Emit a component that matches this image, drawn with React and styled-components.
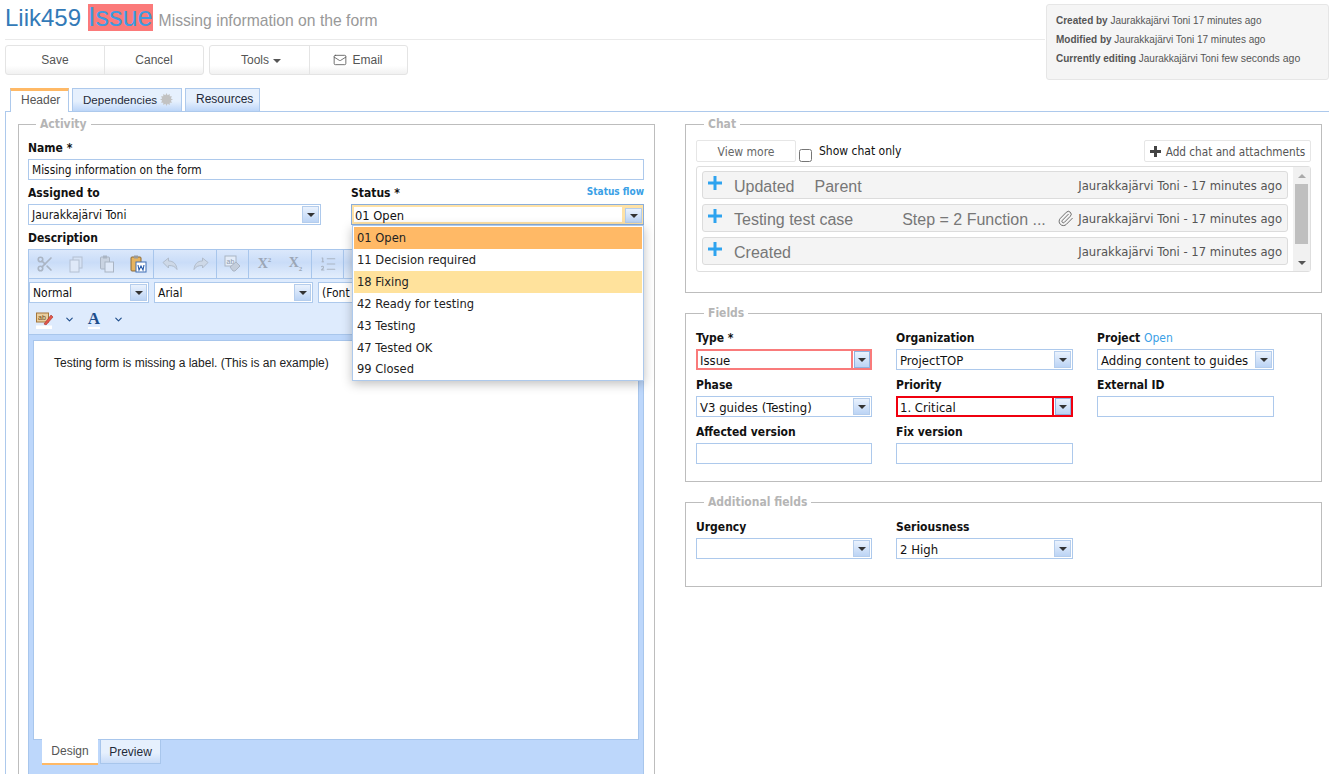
import React from "react"
import styled, { createGlobalStyle } from "styled-components"
import { Scissors, ListOrdered, Mail, Paperclip, ChevronDown } from "lucide-react"

const Global = createGlobalStyle`
    html, body { margin: 0; padding: 0; background: #fff; }
    * { box-sizing: border-box; }
`;

const FORM_FONT = `"DejaVu Sans", "Noto Sans", sans-serif`
const ARIAL = `"Liberation Sans", Arial, sans-serif`

const statuses = [
    { text: "01 Open", bg: "#ffb966" },
    { text: "11 Decision required" },
    { text: "18 Fixing", bg: "#ffe29c" },
    { text: "42 Ready for testing" },
    { text: "43 Testing" },
    { text: "47 Tested OK" },
    { text: "99 Closed" },
]

const chats = [
    { title: "Updated", detail: "Parent", gap: 20 },
    { title: "Testing test case", detail: "Step = 2 Function ...", gap: 49, clip: true },
    { title: "Created" },
]

function Select({ value, width }) {
    return (
        <SelectBox $width={width}>
            <SelectText>{value}</SelectText>
            <SelectArrow><i /></SelectArrow>
        </SelectBox>
    )
}

function App() {
    return (
        <Page>
            <Global />
            <MetaPanel>
                <p><b>Created by</b> Jaurakkajärvi Toni 17 minutes ago</p>
                <p><b>Modified by</b> Jaurakkajärvi Toni 17 minutes ago</p>
                <p><b>Currently editing</b> Jaurakkajärvi Toni <span>few seconds ago</span></p>
            </MetaPanel>

            <TitleRow>
                <TitleId>Liik459</TitleId>
                <TitleType>Issue</TitleType>
                <TitleText>Missing information on the form</TitleText>
            </TitleRow>

            <Toolbar>
                <BtnGroup>
                    <Btn>Save</Btn>
                    <Btn>Cancel</Btn>
                </BtnGroup>
                <BtnGroup>
                    <Btn $left={3}>Tools <Caret /></Btn>
                    <Btn $right={1}><Mail size={14} strokeWidth={1.4} /> Email</Btn>
                </BtnGroup>
            </Toolbar>

            <Tabs>
                <Tab $active $width={59}>Header</Tab>
                <Tab $width={110}>
                    <DepText>Dependencies</DepText>
                    <Gear viewBox="0 0 12 12"><path d="M6 0l1 2 2-1 0 2 2 0-1 2 2 1-2 1 1 2-2 0 0 2-2-1-1 2-1-2-2 1 0-2-2 0 1-2-2-1 2-1-1-2 2 0 0-2 2 1z" /></Gear>
                </Tab>
                <Tab $width={75}>Resources</Tab>
            </Tabs>

            <Panel>
                <Fieldset $width={637} $left={9}>
                    <Legend>Activity</Legend>
                    <NameLabel>Name *</NameLabel>
                    <TextInput>Missing information on the form</TextInput>

                    <TwoCols>
                        <div>
                            <Label>Assigned to</Label>
                            <Select value="Jaurakkajärvi Toni" />
                        </div>
                        <div>
                            <LabelRow>
                                <Label>Status *</Label>
                                <FlowLink>Status flow</FlowLink>
                            </LabelRow>
                            <StatusBox>
                                <StatusInner>01 Open</StatusInner>
                                <SelectArrow><i /></SelectArrow>
                                <Dropdown>
                                    {statuses.map(s => <Option key={s.text} $bg={s.bg}>{s.text}</Option>)}
                                </Dropdown>
                            </StatusBox>
                        </div>
                    </TwoCols>

                    <DescLabel>Description</DescLabel>
                    <Editor>
                        <EditorTools>
                            <ToolGroup>
                                <ToolIcon><Scissors size={18} strokeWidth={2.2} /></ToolIcon>
                                <ToolIcon>
                                    <svg width="16" height="17" viewBox="0 0 16 17">
                                        <rect x="5" y="1" width="9" height="11" fill="#d5e2f5" stroke="#b4c0d2" />
                                        <rect x="2" y="4" width="9" height="12" fill="#dfe9f8" stroke="#b4c0d2" />
                                    </svg>
                                </ToolIcon>
                                <ToolIcon>
                                    <svg width="16" height="18" viewBox="0 0 16 18">
                                        <rect x="1.500" y="2" width="9" height="12" rx="1" fill="#c9d3e1" stroke="#aab5c4" />
                                        <rect x="4" y="0.500" width="4" height="3" fill="#aab5c4" />
                                        <rect x="6" y="7" width="8.500" height="10" fill="#dfe9f8" stroke="#aab5c4" />
                                    </svg>
                                </ToolIcon>
                                <ToolIcon>
                                    <svg width="18" height="18" viewBox="0 0 18 18">
                                        <rect x="2" y="2" width="10" height="14" rx="1" fill="#e7b45f" stroke="#8a6a3a" />
                                        <rect x="5" y="0.500" width="4" height="3" fill="#999" />
                                        <rect x="7" y="7" width="10" height="10" fill="#fff" stroke="#3f6eb5" />
                                        <path d="M9 10l1 5 2-4 2 4 1-5" fill="none" stroke="#2a5caa" strokeWidth="1.100" />
                                    </svg>
                                </ToolIcon>
                            </ToolGroup>
                            <ToolGroup>
                                <ToolIcon>
                                    <svg width="16" height="14" viewBox="0 0 16 14">
                                        <path d="M1 5.500L6.500 1v3C11.500 4 14.500 7 15 12.500 13 9.500 11 8.500 6.500 8.500V11z" fill="#cdd8e7" stroke="#b1bccb" />
                                    </svg>
                                </ToolIcon>
                                <ToolIcon>
                                    <svg width="16" height="14" viewBox="0 0 16 14">
                                        <path d="M15 5.500L9.500 1v3C4.500 4 1.500 7 1 12.500 3 9.500 5 8.500 9.500 8.500V11z" fill="#cdd8e7" stroke="#b1bccb" />
                                    </svg>
                                </ToolIcon>
                            </ToolGroup>
                            <ToolGroup>
                                <ToolIcon>
                                    <svg width="18" height="18" viewBox="0 0 18 18">
                                        <rect x="1" y="1" width="11" height="10" fill="#e3ecf9" stroke="#aab5c4" />
                                        <text x="2.500" y="8.500" fontSize="7" fill="#8e99a9" fontFamily="Liberation Sans">ab</text>
                                        <path d="M6 12l6-5 4 4-5 5H9z" fill="#c4cedc" stroke="#aab5c4" />
                                    </svg>
                                </ToolIcon>
                            </ToolGroup>
                            <ToolGroup>
                                <ScriptIcon>X<sup>2</sup></ScriptIcon>
                                <ScriptIcon>X<sub>2</sub></ScriptIcon>
                            </ToolGroup>
                            <ToolGroup>
                                <ToolIcon><ListOrdered size={18} strokeWidth={1.5} /></ToolIcon>
                            </ToolGroup>
                        </EditorTools>
                        <EditorSelects>
                            <Select value="Normal" width={120} />
                            <Select value="Arial" width={159} />
                            <Select value="(Font size)" width={160} />
                        </EditorSelects>
                        <EditorColors>
                            <ColorTool>
                                <svg width="18" height="18" viewBox="0 0 18 18">
                                    <rect x="0.500" y="2" width="12" height="9" fill="#e9cfa0" stroke="#a5763a" />
                                    <text x="2" y="9" fontSize="7" fill="#6b4a1e" fontFamily="Liberation Sans">ab</text>
                                    <path d="M8 13l7-9 2 2-7 8z" fill="#e2574c" stroke="#a8322a" strokeWidth=".6" />
                                    <rect x="0" y="14.500" width="16" height="3.500" fill="#fff" />
                                </svg>
                            </ColorTool>
                            <ChevronDown size={11} color="#1f4e8c" strokeWidth={2.5} />
                            <ColorTool>
                                <FontA>A</FontA>
                            </ColorTool>
                            <ChevronDown size={11} color="#1f4e8c" strokeWidth={2.5} />
                        </EditorColors>
                        <EditorBody>Testing form is missing a label. (This is an example)</EditorBody>
                        <EditorTabs>
                            <EditorTab $active>Design</EditorTab>
                            <EditorTab>Preview</EditorTab>
                        </EditorTabs>
                    </Editor>
                </Fieldset>

                <RightCol>
                    <Fieldset $height={176}>
                        <Legend>Chat</Legend>
                        <ChatBar>
                            <ChatBtn>View more</ChatBtn>
                            <ChatCheck type="checkbox" />
                            <ChatCheckLabel>Show chat only</ChatCheckLabel>
                            <AddBtn>
                                <svg width="11" height="11" viewBox="0 0 11 11"><path d="M4 0h3v4h4v3H7v4H4V7H0V4h4z" fill="#444" /></svg>
                                <span>Add chat and attachments</span>
                            </AddBtn>
                        </ChatBar>
                        <ChatList>
                            <ChatItems>
                                {chats.map(c => (
                                    <ChatItem key={c.title}>
                                        <Plus viewBox="0 0 14 14"><path d="M5.500 0h3v5.500h5.500v3H8.500v5.500h-3V8.500H0v-3h5.500z" /></Plus>
                                        <ChatTitle>{c.title}</ChatTitle>
                                        {c.detail && <ChatDetail $gap={c.gap}>{c.detail}</ChatDetail>}
                                        <ChatAuthor>
                                            {c.clip && <Paperclip size={17} strokeWidth={1.2} color="#555" />}
                                            Jaurakkajärvi Toni - 17 minutes ago
                                        </ChatAuthor>
                                    </ChatItem>
                                ))}
                            </ChatItems>
                            <Scrollbar>
                                <ScrollUp />
                                <ScrollThumb />
                                <ScrollDown />
                            </Scrollbar>
                        </ChatList>
                    </Fieldset>

                    <Fieldset $height={176}>
                        <Legend>Fields</Legend>
                        <FieldGrid>
                            <div>
                                <Label>Type *</Label>
                                <ColorSelect $line="#f97b7b">
                                    <SelectText>Issue</SelectText>
                                    <SelectArrow><i /></SelectArrow>
                                </ColorSelect>
                            </div>
                            <div>
                                <Label>Organization</Label>
                                <Select value="ProjectTOP" />
                            </div>
                            <div>
                                <Label>Project <OpenLink>Open</OpenLink></Label>
                                <Select value="Adding content to guides" />
                            </div>
                            <div>
                                <Label>Phase</Label>
                                <Select value="V3 guides (Testing)" />
                            </div>
                            <div>
                                <Label>Priority</Label>
                                <ColorSelect $line="#f0000f">
                                    <SelectText>1. Critical</SelectText>
                                    <SelectArrow><i /></SelectArrow>
                                </ColorSelect>
                            </div>
                            <div>
                                <Label>External ID</Label>
                                <TextInput />
                            </div>
                            <div>
                                <Label>Affected version</Label>
                                <TextInput />
                            </div>
                            <div>
                                <Label>Fix version</Label>
                                <TextInput />
                            </div>
                        </FieldGrid>
                    </Fieldset>

                    <Fieldset $height={92}>
                        <Legend>Additional fields</Legend>
                        <FieldGrid>
                            <div>
                                <Label>Urgency</Label>
                                <Select value="" />
                            </div>
                            <div>
                                <Label>Seriousness</Label>
                                <Select value="2 High" />
                            </div>
                        </FieldGrid>
                    </Fieldset>
                </RightCol>
            </Panel>
        </Page>
    )
}

export default App

const Page = styled.div`
    position: relative;
    width: 1329px;
    height: 774px;
    overflow: hidden;
    font-family: ${ARIAL};
    font-size: 12px;
    color: #222;
`;

const MetaPanel = styled.div`
    position: absolute;
    top: 4px;
    left: 1046px;
    width: 283px;
    height: 76px;
    padding: 6px 9px;
    background: #f5f5f5;
    border: 1px solid #e6e6e6;
    border-radius: 3px;
    font-size: 10px;
    color: #555;
    p {
        margin: 0;
        height: 19px;
        line-height: 19px;
        white-space: nowrap;
    }
    span {
        font-size: 10.5px;
    }
`;

const TitleRow = styled.div`
    margin-left: 5px;
    height: 40px;
    padding-top: 4px;
    border-bottom: 1px solid #eaeaea;
    display: flex;
    align-items: flex-start;
    width: 1040px;
`;

const TitleId = styled.span`
    font-size: 24px;
    line-height: 27px;
    color: #337ab7;
    margin-right: 7px;
`;

const TitleType = styled.span`
    font-size: 27px;
    line-height: 27px;
    height: 27px;
    color: #3d9be0;
    background: #fb7a7a;
    margin-right: 6px;
`;

const TitleText = styled.span`
    font-size: 15.7px;
    line-height: 33px;
    color: #999;
`;

const Toolbar = styled.div`
    display: flex;
    gap: 5px;
    margin: 5px 0 0 5px;
`;

const BtnGroup = styled.div`
    display: flex;
    height: 30px;
    width: 199px;
    border: 1px solid #e4e4e4;
    border-radius: 3px;
    background: linear-gradient(to bottom, #fff 70%, #f1f1f1);
`;

const Btn = styled.div`
    flex: 1;
    display: flex;
    align-items: center;
    justify-content: center;
    gap: 5px;
    color: #555;
    padding-left: ${props => props.$left || 0}px;
    padding-right: ${props => props.$right || 0}px;
    & + & {
        border-left: 1px solid #e4e4e4;
    }
`;

const Caret = styled.i`
    width: 0;
    height: 0;
    margin: 2px 0 0 -1px;
    border-left: 4px solid transparent;
    border-right: 4px solid transparent;
    border-top: 4px solid #555;
`;

const Tabs = styled.div`
    display: flex;
    align-items: flex-end;
    gap: 3px;
    height: 24px;
    margin: 13px 0 0 10px;
`;

const Tab = styled.div`
    width: ${props => props.$width}px;
    height: 24px;
    border: 1px solid #adc9ec;
    border-bottom: ${props => props.$active ? 'none' : '1px solid #adc9ec'};
    border-top: ${props => props.$active ? '3px solid #ffb966' : '1px solid #adc9ec'};
    background: ${props => props.$active ? '#fff' : 'linear-gradient(to bottom, #e6f0fd 55%, #bdd6f8)'};
    color: ${props => props.$active ? '#555' : '#1f2a3a'};
    padding-left: 10px;
    line-height: ${props => props.$active ? '18px' : '20px'};
    display: flex;
    gap: 3px;
    white-space: nowrap;
    position: relative;
    z-index: 1;
`;

const DepText = styled.span`
    font-size: 11.6px;
    line-height: 21px;
`;

const Gear = styled.svg`
    width: 13px;
    height: 13px;
    margin-top: 4px;
    fill: #c2c2c2;
`;

const Panel = styled.div`
    margin: -1px 0 0 5px;
    height: 700px;
    border-top: 1px solid #adc9ec;
    border-left: 1px solid #adc9ec;
    padding: 5px 6px 0 12px;
    display: flex;
    gap: 30px;
    align-items: flex-start;
`;

const Fieldset = styled.fieldset`
    margin: 0;
    padding: 0 10px 0 ${props => props.$left || 10}px;
    min-width: 0;
    border: 1px solid #bdbdbd;
    width: ${props => props.$width ? props.$width + 'px' : '100%'};
    height: ${props => props.$height ? props.$height + 'px' : '720px'};
`;

const Legend = styled.legend`
    margin-left: 8px;
    padding: 0 4px;
    font-weight: bold;
    font-size: 12px;
    line-height: 14px;
    color: #b5b5b5;
    font-family: ${FORM_FONT};
    font-stretch: condensed;
`;

const Label = styled.div`
    font-family: ${FORM_FONT};
    font-stretch: condensed;
    font-weight: bold;
    font-size: 12px;
    line-height: 15px;
    color: #111;
    white-space: nowrap;
`;

const NameLabel = styled(Label)`
    margin-top: 10px;
`;

const OpenLink = styled.span`
    font-weight: normal;
    color: #3aa0e6;
`;

const TextInput = styled.div`
    height: 21px;
    margin-top: 3px;
    padding: 0 3px;
    border: 1px solid #adc9ec;
    font-family: ${FORM_FONT};
    font-stretch: condensed;
    font-size: 11.8px;
    line-height: 21px;
    color: #111;
    background: #fff;
`;

const TwoCols = styled.div`
    display: grid;
    grid-template-columns: 293px 293px;
    column-gap: 30px;
    margin-top: 6px;
`;

const LabelRow = styled.div`
    display: flex;
    justify-content: space-between;
`;

const FlowLink = styled.span`
    font-family: ${FORM_FONT};
    font-stretch: condensed;
    font-size: 10px;
    font-weight: bold;
    color: #3aa0e6;
    line-height: 12px;
`;

const SelectBox = styled.div`
    position: relative;
    display: flex;
    align-items: stretch;
    height: 21px;
    margin-top: 3px;
    border: 1px solid #adc9ec;
    background: #fff;
    width: ${props => props.$width ? props.$width + 'px' : '100%'};
    flex: none;
`;

const SelectText = styled.div`
    flex: 1;
    min-width: 0;
    overflow: hidden;
    padding: 0 3px;
    font-family: ${FORM_FONT};
    font-stretch: condensed;
    font-size: 12px;
    line-height: 21px;
    color: #111;
    white-space: nowrap;
`;

const SelectArrow = styled.div`
    width: 17px;
    margin: 1px;
    flex: none;
    border: 1px solid #b5cdec;
    background: linear-gradient(to bottom, #eaf2fd, #bcd4f5);
    display: flex;
    align-items: center;
    justify-content: center;
    i {
        width: 0;
        height: 0;
        border-left: 4px solid transparent;
        border-right: 4px solid transparent;
        border-top: 4px solid #333;
    }
`;

const ColorSelect = styled(SelectBox)`
    border: 2px solid ${props => props.$line};
    ${SelectText} {
        margin-right: 1px;
        border-right: 2px solid ${props => props.$line};
        line-height: 19px;
        padding-left: 2px;
    }
    ${SelectArrow} {
        margin: 0;
        width: 16px;
        border-color: #8fb2e0;
    }
`;

const StatusBox = styled(SelectBox)`
    border: 1px solid #8aaedb;
    background: #ffe2a6;
    padding: 2px 0 0 2px;
`;

const StatusInner = styled.div`
    flex: 1;
    background: #fff;
    margin-bottom: 2px;
    margin-right: 2px;
    font-family: ${FORM_FONT};
    font-stretch: condensed;
    font-size: 12.8px;
    line-height: 17px;
    padding-left: 1px;
    color: #111;
`;

const Dropdown = styled.div`
    position: absolute;
    z-index: 5;
    left: 0;
    top: 20px;
    width: 292px;
    height: 156px;
    padding: 1px;
    background: #fff;
    border: 1px solid #adc9ec;
    box-shadow: 0 3px 10px rgba(0, 0, 0, 0.25);
`;

const Option = styled.div`
    height: 22px;
    padding-left: 3px;
    font-family: ${FORM_FONT};
    font-stretch: condensed;
    font-size: 12.8px;
    line-height: 22px;
    color: #222;
    background: ${props => props.$bg || 'transparent'};
    &:last-child {
        line-height: 20px;
    }
`;

const DescLabel = styled(Label)`
    margin-top: 6px;
`;

const Editor = styled.div`
    height: 540px;
    margin-top: 3px;
    background: #bdd7fb;
    border: 1px solid #a8c6ec;
    display: flex;
    flex-direction: column;
`;

const EditorTools = styled.div`
    display: flex;
    height: 29px;
    flex: none;
    background: linear-gradient(to bottom, #dbe8fb, #c9dcf8 45%, #e3eefc);
    border-bottom: 1px solid #a8c6ec;
`;

const ToolGroup = styled.div`
    display: flex;
    align-items: center;
    border-right: 1px solid #a8c6ec;
`;

const ToolIcon = styled.span`
    width: 31px;
    height: 20px;
    display: flex;
    align-items: center;
    justify-content: center;
    color: #aab5c4;
`;

const ScriptIcon = styled.span`
    width: 31px;
    text-align: center;
    font-family: "Liberation Serif", serif;
    font-weight: bold;
    font-size: 14px;
    color: #9ba6b5;
    sup, sub {
        font-size: 7px;
    }
`;

const EditorSelects = styled.div`
    display: flex;
    gap: 5px;
    padding-top: 3px;
    height: 26px;
    flex: none;
    background: #deebfd;
    overflow: hidden;
    ${SelectBox} {
        margin-top: 0;
        height: 21px;
    }
`;

const EditorColors = styled.div`
    display: flex;
    align-items: center;
    gap: 10px;
    height: 30px;
    flex: none;
    padding-left: 7px;
    background: #deebfd;
    border-bottom: 1px solid #a8c6ec;
`;

const ColorTool = styled.span`
    width: 18px;
    height: 18px;
    display: flex;
    justify-content: center;
`;

const FontA = styled.span`
    font-family: "Liberation Serif", serif;
    font-weight: bold;
    font-size: 17px;
    line-height: 16px;
    color: #1f4e8c;
    border-bottom: 2px solid #fff;
    height: 18px;
`;

const EditorBody = styled.div`
    margin: 5px 4px 0;
    height: 400px;
    flex: none;
    padding: 15px 20px;
    background: #fff;
    border: 1px solid #a8c6ec;
    font-size: 12px;
    color: #222;
`;

const EditorTabs = styled.div`
    display: flex;
    gap: 2px;
    padding-left: 13px;
    margin-top: -1px;
`;

const EditorTab = styled.div`
    width: ${props => props.$active ? '56px' : '61px'};
    height: ${props => props.$active ? '26px' : '25px'};
    text-align: center;
    line-height: 24px;
    color: ${props => props.$active ? '#555' : '#1f2a3a'};
    background: ${props => props.$active ? '#fff' : 'linear-gradient(to bottom, #e6f0fd 55%, #c9dcf8)'};
    border: ${props => props.$active ? 'none' : '1px solid #a8c6ec'};
    border-bottom: ${props => props.$active ? '2px solid #ffb966' : '1px solid #a8c6ec'};
`;

const RightCol = styled.div`
    width: 637px;
    display: flex;
    flex-direction: column;
    gap: 13px;
`;

const ChatBar = styled.div`
    display: flex;
    align-items: center;
    height: 22px;
    margin-top: 9px;
`;

const ChatBtn = styled.div`
    width: 100px;
    height: 22px;
    border: 1px solid #e6e6e6;
    border-radius: 2px;
    text-align: center;
    line-height: 22px;
    font-family: ${FORM_FONT};
    font-stretch: condensed;
    color: #666;
`;

const ChatCheck = styled.input`
    width: 13px;
    height: 13px;
    margin: 8px 7px 0 3px;
`;

const ChatCheckLabel = styled.span`
    font-family: ${FORM_FONT};
    font-stretch: condensed;
    color: #111;
`;

const AddBtn = styled.div`
    margin-left: auto;
    width: 167px;
    height: 22px;
    border: 1px solid #e6e6e6;
    border-radius: 2px;
    display: flex;
    align-items: center;
    justify-content: center;
    gap: 5px;
    font-family: ${FORM_FONT};
    font-stretch: condensed;
    font-size: 11.7px;
    color: #555;
    white-space: nowrap;
    span {
        margin-top: 1px;
    }
`;

const ChatList = styled.div`
    display: flex;
    height: 106px;
    margin-top: 4px;
    border: 1px solid #dedede;
    border-radius: 3px;
`;

const ChatItems = styled.div`
    flex: 1;
    display: flex;
    flex-direction: column;
    gap: 5px;
    padding: 4px 5px 0;
`;

const ChatItem = styled.div`
    height: 28px;
    display: flex;
    align-items: center;
    padding-left: 5px;
    background: #f4f4f4;
    border: 1px solid #dcdcdc;
    border-radius: 3px;
`;

const Plus = styled.svg`
    width: 14px;
    height: 14px;
    margin-top: -4px;
    fill: #2ea3ef;
    flex: none;
`;

const ChatTitle = styled.span`
    margin: 4px 0 0 12px;
    font-size: 16px;
    color: #777;
    white-space: nowrap;
`;

const ChatDetail = styled.span`
    margin: 4px 0 0 ${props => props.$gap}px;
    font-size: 16px;
    color: #777;
    white-space: nowrap;
`;

const ChatAuthor = styled.span`
    margin-left: auto;
    padding-right: 5px;
    display: flex;
    align-items: center;
    gap: 4px;
    font-family: ${FORM_FONT};
    font-stretch: condensed;
    font-size: 12.9px;
    color: #555;
    white-space: nowrap;
`;

const Scrollbar = styled.div`
    width: 17px;
    background: #f1f1f1;
    display: flex;
    flex-direction: column;
    align-items: center;
`;

const ScrollUp = styled.i`
    width: 0;
    height: 0;
    margin: 7px 0 6px;
    border-left: 4px solid transparent;
    border-right: 4px solid transparent;
    border-bottom: 4px solid #aaa;
`;

const ScrollThumb = styled.div`
    width: 13px;
    height: 60px;
    background: #bfbfbf;
`;

const ScrollDown = styled.i`
    width: 0;
    height: 0;
    margin-top: 17px;
    border-left: 4px solid transparent;
    border-right: 4px solid transparent;
    border-top: 4px solid #555;
`;

const FieldGrid = styled.div`
    display: grid;
    grid-template-columns: 176px 177px 177px;
    column-gap: 24px;
    grid-auto-rows: 47px;
    margin-top: 11px;
    ${SelectText} {
        font-size: 13px;
    }
`;
